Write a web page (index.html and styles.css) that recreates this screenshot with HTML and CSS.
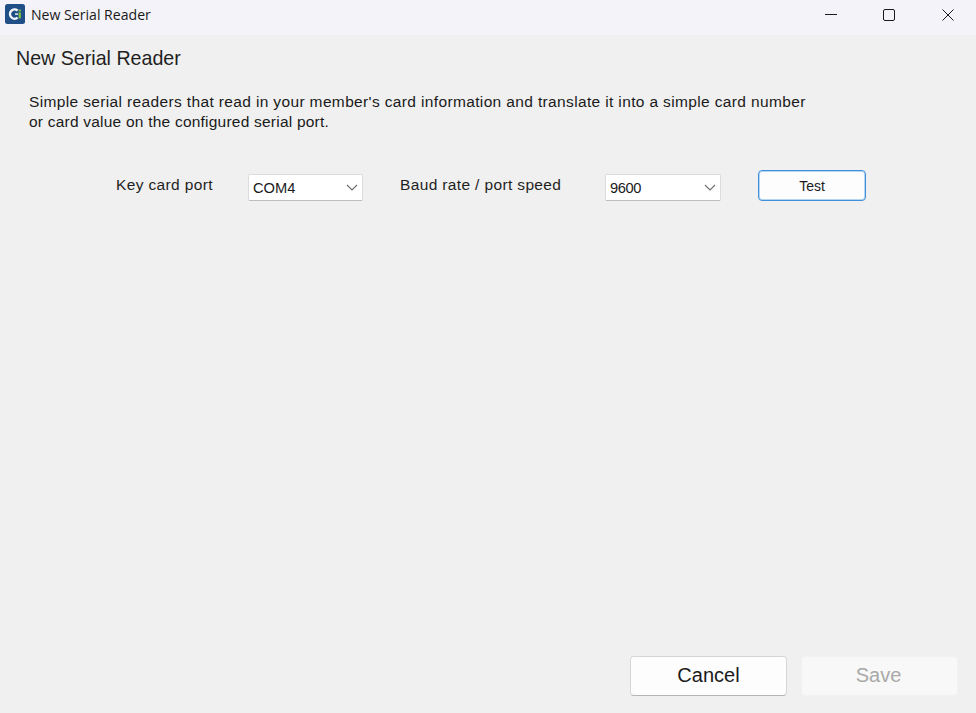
FILE: index.html
```html
<!DOCTYPE html>
<html lang="en">
<head>
<meta charset="utf-8">
<title>New Serial Reader</title>
<link rel="stylesheet" href="styles.css">
</head>
<body>
<div class="window">
  <header class="titlebar">
    <svg class="app-icon" width="20" height="20" viewBox="0 0 20 20" aria-hidden="true">
      <rect width="20" height="20" rx="2.5" fill="#1f4f86"/>
      <path d="M12.6 6.6A4.6 4.6 0 1 0 12.6 13.6" fill="none" stroke="#f4f7fa" stroke-width="2.4"/>
      <rect x="10" y="9.4" width="3" height="1.4" fill="#f4f7fa"/>
      <rect x="13.6" y="8.4" width="2.2" height="6" fill="#8cc63f"/>
      <rect x="13.6" y="5.6" width="2.2" height="1.8" fill="#8cc63f"/>
    </svg>
    <span class="window-title">New Serial Reader</span>
    <div class="window-controls">
      <button class="win-btn"><svg width="12" height="12" viewBox="0 0 12 12"><path d="M0 5.5H12" stroke="#1a1a1a" stroke-width="1"/></svg></button>
      <button class="win-btn"><svg width="12" height="12" viewBox="0 0 12 12"><rect x="0.5" y="0.5" width="11" height="11" rx="1.5" fill="none" stroke="#1a1a1a"/></svg></button>
      <button class="win-btn"><svg width="12" height="12" viewBox="0 0 12 12"><path d="M0.5 0.5L11.5 11.5M11.5 0.5L0.5 11.5" stroke="#1a1a1a" stroke-width="1"/></svg></button>
    </div>
  </header>
  <main class="content">
    <h1 class="heading">New Serial Reader</h1>
    <p class="description">Simple serial readers that read in your member's card information and translate it into a simple card number<br><span class="description-tail">or card value on the configured serial port.</span></p>
    <div class="form-row">
      <label class="field-label label-port">Key card port</label>
      <div class="select select-port"><span>COM4</span><svg width="12" height="7" viewBox="0 0 12 7"><path d="M1 1L6 6L11 1" fill="none" stroke="#6e6e6e" stroke-width="1.1"/></svg></div>
      <label class="field-label label-baud">Baud rate / port speed</label>
      <div class="select select-baud"><span>9600</span><svg width="12" height="7" viewBox="0 0 12 7"><path d="M1 1L6 6L11 1" fill="none" stroke="#6e6e6e" stroke-width="1.1"/></svg></div>
      <button class="btn-test">Test</button>
    </div>
    <footer class="actions">
      <button class="btn btn-cancel">Cancel</button>
      <button class="btn btn-save" disabled>Save</button>
    </footer>
  </main>
</div>
</body>
</html>
```
FILE: styles.css
```css
* { box-sizing: border-box; }
html, body { margin: 0; height: 100%; overflow: hidden; }
body { font-family: "Liberation Sans", Arial, sans-serif; color: #1a1a1a; background: #f0f0f0; }
.window { display: flex; flex-direction: column; height: 713px; }
.titlebar { display: flex; align-items: flex-start; height: 35px; flex: none; padding-left: 5px; background: #f3f3f9; }
.app-icon { flex: none; margin-top: 4px; }
.window-title { margin: 5px 0 0 6px; font-family: "Open Sans", sans-serif; font-size: 14.1px; line-height: 20px; color: #1a1a1a; }
.window-controls { display: flex; margin-left: auto; margin-right: -1px; }
.win-btn { width: 58.5px; height: 30px; padding: 0; border: 0; background: transparent; display: flex; align-items: center; justify-content: center; }
.content { flex: 1; display: flex; flex-direction: column; padding: 12px 18px 17px 16px; }
.heading { margin: 0; font-size: 19.65px; font-weight: 400; line-height: 23px; color: #1f1f1f; }
.description { margin: 22px 0 0 13px; font-size: 15.5px; letter-spacing: 0.36px; line-height: 20px; color: #1a1a1a; }
.description-tail { letter-spacing: 0.22px; }
.form-row { display: flex; align-items: flex-start; margin-top: 38px; padding-left: 100px; }
.field-label { font-size: 15.5px; letter-spacing: 0.36px; line-height: 18px; color: #1f1f1f; margin-top: 6px; }
.label-port { width: 132px; }
.label-baud { margin-left: 37px; width: 205px; }
.select { display: flex; align-items: center; justify-content: space-between; width: 115px; height: 27px; margin-top: 4px; padding: 0 4px 0 4px; background: #fff; border: 1px solid #dcdcdc; border-bottom-color: #bdbdbd; border-radius: 2px; font-size: 14.67px; color: #1a1a1a; }
.select-baud { letter-spacing: -0.4px; width: 116px; }
.btn-test { width: 108px; height: 31px; margin-left: 37px; padding: 0; background: #fdfdfd; border: 1px solid #3f8fdb; border-radius: 4px; box-shadow: inset 0 0 0 1px #b5d6f2; font: 14px "Liberation Sans", Arial, sans-serif; color: #1a1a1a; }
.actions { display: flex; justify-content: flex-end; gap: 14px; margin-top: auto; }
.btn { width: 157px; height: 40px; padding: 0 0 2px 0; border-radius: 4px; font: 20px "Liberation Sans", Arial, sans-serif; }
.btn-cancel { background: #fdfdfd; border: 1px solid #d6d6d6; border-bottom-color: #b5b5b5; color: #1a1a1a; }
.btn-save { padding-right: 2px; background: #f8f8f8; border: 1px solid #f2f2f2; color: #a9a9a9; }
```
